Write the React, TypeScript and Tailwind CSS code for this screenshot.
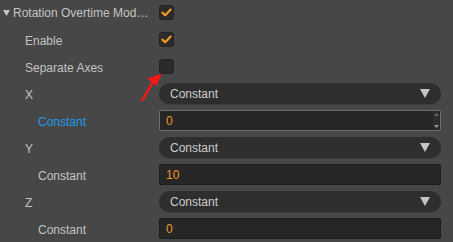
import { ReactNode } from 'react';

function Check({ checked }: { checked?: boolean }) {
  return (
    <div className="w-[15px] h-[15px] rounded-[3px] bg-[#2b2b2b] border border-[#222] flex items-center justify-center">
      {checked && (
        <svg width="11" height="9" viewBox="0 0 11 9">
          <path d="M1.5 4.6 L4.2 7.2 L9.6 1.6" fill="none" stroke="#f39c24" strokeWidth="2.2" strokeLinecap="round" strokeLinejoin="round" />
        </svg>
      )}
    </div>
  );
}

function Select({ value }: { value: string }) {
  return (
    <div className="h-[21px] w-full rounded-full bg-[#2e2e2e] flex items-center justify-between pl-[11px] pr-[11px] shadow-[0_1px_0_#3a3a3a]">
      <span className="text-[12px] text-[#cdcdcd]">{value}</span>
      <svg width="10" height="9" viewBox="0 0 10 9">
        <path d="M0 0 H10 L5 9 Z" fill="#c4c4c4" />
      </svg>
    </div>
  );
}

function NumInput({ value, focused }: { value: string; focused?: boolean }) {
  return (
    <div
      className={
        focused
          ? 'relative h-[21px] w-full rounded-[2px] bg-[#262626] border border-[#6f6f6f] flex items-center pl-[6px]'
          : 'relative h-[21px] w-full rounded-[2px] bg-[#262626] border border-[#1c1c1c] flex items-center pl-[6px]'
      }
    >
      <span className="text-[12px] text-[#f0962a]">{value}</span>
      {focused && (
        <div className="absolute right-[1px] top-[1px] bottom-[1px] w-[6px] flex flex-col justify-between items-center py-[1px] bg-[#2e2e2e]">
          <svg width="5" height="3" viewBox="0 0 5 3"><path d="M0 3 H5 L2.5 0 Z" fill="#6a6a6a" /></svg>
          <svg width="5" height="3" viewBox="0 0 5 3"><path d="M0 0 H5 L2.5 3 Z" fill="#9a9a9a" /></svg>
        </div>
      )}
    </div>
  );
}

function Row({ label, indent, blue, children }: { label: ReactNode; indent: number; blue?: boolean; children: ReactNode }) {
  return (
    <div className="h-[27px] flex items-center">
      <div
        className={indent === 2 ? 'w-[159px] pl-[38px] pr-[12px] truncate' : 'w-[159px] pl-[25px] pr-[12px] truncate'}
      >
        <span className={blue ? 'text-[12px] text-[#1e9bf0]' : 'text-[12px] text-[#c4c4c4]'}>{label}</span>
      </div>
      <div className="flex-1 flex items-center">{children}</div>
    </div>
  );
}

export default function App() {
  return (
    <div
      className="relative w-[453px] h-[242px] overflow-hidden bg-[#474747]"
      style={{ fontFamily: '"Liberation Sans", Arial, sans-serif' }}
    >
      <div className="-mt-[1px] pr-[12px] flex flex-col">
        <div className="h-[27px] flex items-center">
          <div className="w-[159px] pl-[3px] pr-[10px] flex items-center gap-[3px]">
            <svg width="7" height="6" viewBox="0 0 7 6" className="shrink-0">
              <path d="M0 0 H7 L3.5 6 Z" fill="#c4c4c4" />
            </svg>
            <span className="truncate text-[12px] text-[#c4c4c4]">Rotation Overtime Module</span>
          </div>
          <Check checked />
        </div>
        <Row label="Enable" indent={1}>
          <Check checked />
        </Row>
        <Row label="Separate Axes" indent={1}>
          <Check />
        </Row>
        <Row label="X" indent={1}>
          <Select value="Constant" />
        </Row>
        <Row label="Constant" indent={2} blue>
          <NumInput value="0" focused />
        </Row>
        <Row label="Y" indent={1}>
          <Select value="Constant" />
        </Row>
        <Row label="Constant" indent={2}>
          <NumInput value="10" />
        </Row>
        <Row label="Z" indent={1}>
          <Select value="Constant" />
        </Row>
        <Row label="Constant" indent={2}>
          <NumInput value="0" />
        </Row>
      </div>

      {/* red annotation arrow */}
      <svg className="absolute left-0 top-0 pointer-events-none" width="453" height="242" viewBox="0 0 453 242">
        <path d="M142.5 100 L153 82" stroke="#f01818" strokeWidth="2.5" strokeLinecap="round" />
        <path d="M162 73.5 L147 78.5 L156.5 86 Z" fill="#f01818" />
      </svg>
    </div>
  );
}
